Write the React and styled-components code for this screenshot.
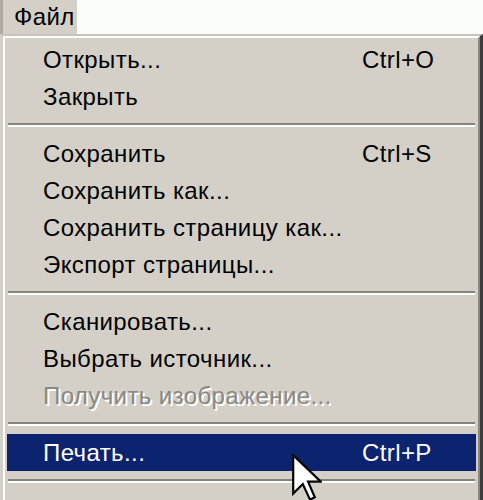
import React from 'react';
import styled, { createGlobalStyle } from 'styled-components';

const GlobalStyle = createGlobalStyle`
  html, body {
    margin: 0;
    padding: 0;
    background: #fbfdf9;
  }
  body {
    font-family: "Liberation Sans", Arial, sans-serif;
  }
`;

const Page = styled.div`
  position: relative;
  width: 483px;
  height: 500px;
  overflow: hidden;
  background: #fbfdf9;
`;

const MenuBar = styled.div`
  display: flex;
  height: 34px;
`;

const BarTab = styled.div`
  width: 77px;
  border-left: 3px solid #aeaaa2;
  background: #d4d0c8;
  padding-left: 11px;
  box-sizing: border-box;
  display: flex;
  align-items: center;
  font-size: 24px;
  letter-spacing: 0.4px;
  color: #000;
`;

const Menu = styled.div`
  background: #d4d0c8;
  border-style: solid;
  border-width: 2px 3px 0 3px;
  border-color: #c8c4bc #3c3c3c #3c3c3c #d4d0c8;
  height: 466px;
  box-sizing: border-box;
`;

const MenuInner = styled.div`
  border-style: solid;
  border-width: 2px 2px 0 2px;
  border-color: #ffffff #8a8780 #8a8780 #ffffff;
  padding: 3px 2px 0 2px;
  height: 100%;
  box-sizing: border-box;
`;

const Item = styled.div`
  display: flex;
  align-items: center;
  height: 37px;
  padding-left: 36px;
  padding-top: 1px;
  box-sizing: border-box;
  font-size: 24px;
  letter-spacing: 0.4px;
  white-space: nowrap;
  background: ${p => (p.$active ? '#0c2370' : 'transparent')};
  color: ${p => (p.$active ? '#ffffff' : p.$disabled ? '#8a8882' : '#000000')};
  text-shadow: ${p => (p.$disabled ? '2px 2px 0 #ffffff' : 'none')};
`;

const Label = styled.span`
  flex: 0 0 319px;
`;

const Shortcut = styled.span``;

const Separator = styled.div`
  height: 20px;
  display: flex;
  flex-direction: column;
  justify-content: center;
  padding: 0 1px;

  &::before {
    content: '';
    height: 2px;
    background: #86837c;
  }
  &::after {
    content: '';
    height: 2px;
    background: #ffffff;
  }
`;

const Cursor = styled.svg`
  position: absolute;
  left: 292px;
  top: 454px;
`;

const groups = [
  [
    { label: 'Открыть...', key: 'Ctrl+O' },
    { label: 'Закрыть' },
  ],
  [
    { label: 'Сохранить', key: 'Ctrl+S' },
    { label: 'Сохранить как...' },
    { label: 'Сохранить страницу как...' },
    { label: 'Экспорт страницы...' },
  ],
  [
    { label: 'Сканировать...' },
    { label: 'Выбрать источник...' },
    { label: 'Получить изображение...', disabled: true },
  ],
  [
    { label: 'Печать...', key: 'Ctrl+P', active: true },
  ],
];

export default function App() {
  return (
    <Page>
      <GlobalStyle />
      <MenuBar>
        <BarTab>Файл</BarTab>
      </MenuBar>
      <Menu>
        <MenuInner>
          {groups.map((group, gi) => (
            <React.Fragment key={gi}>
              {group.map(item => (
                <Item key={item.label} $active={item.active} $disabled={item.disabled}>
                  <Label>{item.label}</Label>
                  {item.key && <Shortcut>{item.key}</Shortcut>}
                </Item>
              ))}
              <Separator />
            </React.Fragment>
          ))}
        </MenuInner>
      </Menu>
      <Cursor width="30" height="48" viewBox="0 0 12.5 20">
        <path
          d="M0.5 0.5 L0.5 16.5 L4.5 12.5 L7.5 19 L9.5 18 L6.7 11.5 L12 11.5 Z"
          fill="#ffffff"
          stroke="#000000"
          strokeWidth="0.9"
          strokeLinejoin="miter"
        />
      </Cursor>
    </Page>
  );
}
